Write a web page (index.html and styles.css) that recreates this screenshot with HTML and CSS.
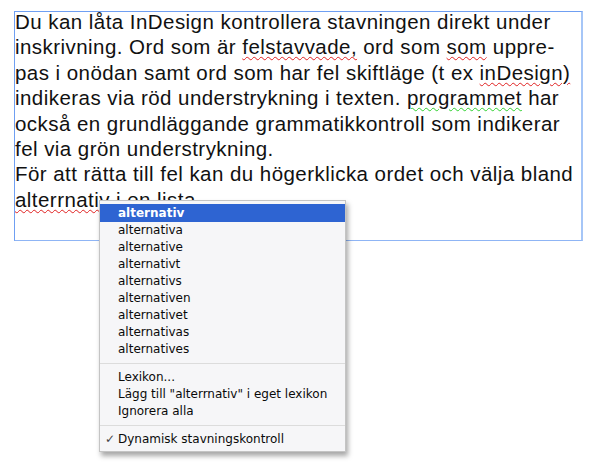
FILE: index.html
```html
<!DOCTYPE html>
<html>
<head>
<meta charset="utf-8">
<link rel="stylesheet" href="styles.css">
</head>
<body>
<div class="page">
  <div class="frame">
    <p class="text">Du kan låta InDesign kontrollera stavningen direkt under<br>inskrivning. Ord som är <span class="sp">felstavvade,</span> ord som <span class="sp">som</span> uppre-<br>pas i onödan samt ord som har fel skiftläge (t ex <span class="sp">inDesign)</span><br>indikeras via röd understrykning i texten. <span class="gr">programmet</span> har<br>också en grundläggande grammatikkontroll som indikerar<br>fel via grön understrykning.<br>För att rätta till fel kan du högerklicka ordet och välja bland<br><span class="sp">alterrnativ</span> i en lista.</p>
  </div>
  <div class="menu">
    <div class="item sel">alternativ</div>
    <div class="item">alternativa</div>
    <div class="item">alternative</div>
    <div class="item">alternativt</div>
    <div class="item">alternativs</div>
    <div class="item">alternativen</div>
    <div class="item">alternativet</div>
    <div class="item">alternativas</div>
    <div class="item">alternatives</div>
    <div class="sep"></div>
    <div class="item">Lexikon...</div>
    <div class="item">Lägg till "alterrnativ" i eget lexikon</div>
    <div class="item">Ignorera alla</div>
    <div class="sep"></div>
    <div class="item"><span class="check">✓</span>Dynamisk stavningskontroll</div>
  </div>
</div>
</body>
</html>
```
FILE: styles.css
```css
html, body {
  margin: 0;
  padding: 0;
  background: #ffffff;
}
.page {
  position: relative;
  width: 598px;
  height: 468px;
  padding-top: 11px;
  box-sizing: border-box;
}
.frame {
  margin-left: 14px;
  width: 566px;
  height: 228px;
  border: 1px solid #6f9ff2;
  border-right: 2px solid #a6c6f7;
  border-bottom-color: #8fb5f5;
}
.text {
  margin: -3px 0 0 0;
  font-family: "Liberation Sans", Arial, sans-serif;
  font-size: 20.5px;
  letter-spacing: 0.45px;
  line-height: 25.4px;
  color: #111111;
  white-space: nowrap;
}
.sp {
  text-decoration: underline wavy #e02020;
  text-decoration-thickness: 1px;
  text-underline-offset: 2px;
}
.gr {
  text-decoration: underline wavy #30d030;
  text-decoration-thickness: 1px;
  text-underline-offset: 2px;
}
.menu {
  position: absolute;
  left: 99px;
  top: 200px;
  width: 247px;
  padding: 3px 0 3px 0;
  background: #f6f6f8;
  border: 1px solid #c4c4c4;
  box-shadow: 2px 4px 5px rgba(0,0,0,0.35);
  font-family: "DejaVu Sans", Verdana, sans-serif;
  font-size: 12px;
  color: #0a0a0a;
  box-sizing: border-box;
}
.item {
  position: relative;
  height: 17px;
  line-height: 17px;
  padding-left: 18px;
  white-space: nowrap;
}
.item.sel {
  background: #2e64d2;
  color: #ffffff;
  font-weight: bold;
  height: 18px;
  line-height: 18px;
}
.sep {
  height: 1px;
  background: #dcdcdc;
  margin: 5px 0 5px 0;
}
.check {
  position: absolute;
  left: 5px;
  color: #444444;
}
```
